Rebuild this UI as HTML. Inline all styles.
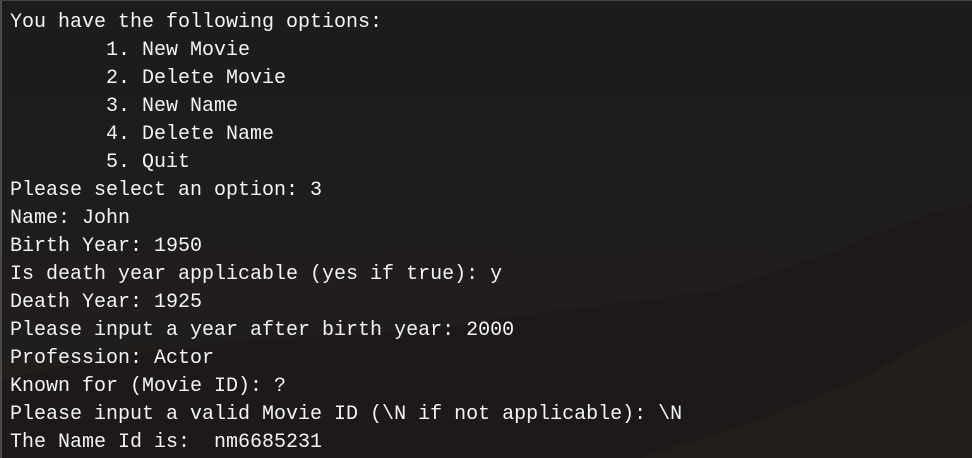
<!DOCTYPE html>
<html><head><meta charset="utf-8"><style>
html,body{margin:0;padding:0}
body{width:972px;height:458px;overflow:hidden;position:relative;background:#1a1a1b;}
.bg{position:absolute;left:0;top:0}
pre{position:absolute;left:0;top:0;margin:0;padding:9px 0 0 10px;font-family:"Liberation Mono",monospace;font-size:20px;line-height:28px;color:#f4f4f4;white-space:pre;}
.edge{position:absolute;left:0;top:0;width:2px;height:458px;background:#4a4a4a}
.edgeT{position:absolute;left:0;top:0;width:972px;height:1px;background:#444}
</style></head><body>
<svg class="bg" width="972" height="458" viewBox="0 0 972 458">
<defs><linearGradient id="g" x1="0" y1="0" x2="0" y2="1"><stop offset="0" stop-color="#1c1c1d"/><stop offset="1" stop-color="#221e1c"/></linearGradient></defs>
<rect width="972" height="458" fill="url(#g)"/>
<path d="M0,380 L120,355 L250,340 L420,330 L560,310 L640,300 L720,290 L760,275 L800,262 L840,250 L870,235 L900,225 L930,213 L972,205 L972,458 L0,458 Z" fill="#1c1918"/>
<path d="M640,458 L760,420 L860,380 L930,340 L972,320 L972,458 Z" fill="#231e1b"/>
</svg>
<div class="edge"></div><div class="edgeT"></div>
<pre>You have the following options:
        1. New Movie
        2. Delete Movie
        3. New Name
        4. Delete Name
        5. Quit
Please select an option: 3
Name: John
Birth Year: 1950
Is death year applicable (yes if true): y
Death Year: 1925
Please input a year after birth year: 2000
Profession: Actor
Known for (Movie ID): ?
Please input a valid Movie ID (\N if not applicable): \N
The Name Id is:  nm6685231</pre>
</body></html>
